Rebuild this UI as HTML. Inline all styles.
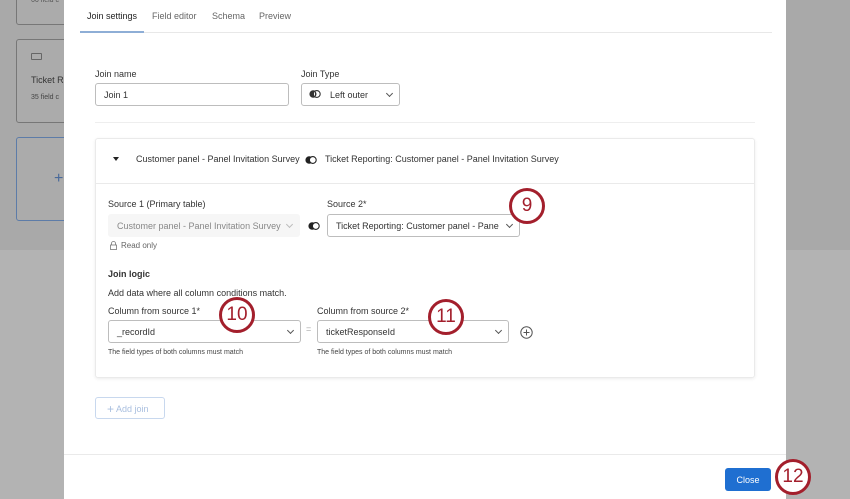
<!DOCTYPE html>
<html><head><meta charset="utf-8"><style>
*{box-sizing:border-box;margin:0;padding:0}
body{width:850px;height:499px;overflow:hidden;position:relative;font-family:"Liberation Sans",sans-serif;color:#333;background:#b3b3b3}
.a{position:absolute}
.t{font-size:9px;white-space:nowrap}
.inp{position:absolute;border:1px solid #bdbdbd;border-radius:3px;background:#fff;font-size:9px;color:#333;padding-left:8px;display:flex;align-items:center;white-space:nowrap;overflow:hidden}
.chev{position:absolute;right:7px;top:7px;width:5px;height:5px;border-right:1px solid #555;border-bottom:1px solid #555;transform:rotate(45deg)}
.circ{position:absolute;width:36px;height:36px;border:3px solid #a31f2c;border-radius:50%;background:#fff;color:#a31f2c;font-size:19px;display:flex;align-items:center;justify-content:center}
.ven{position:absolute;width:12px;height:10px}
</style></head><body>
<div class="a" style="left:0;top:0;width:850px;height:250px;background:#a9a9a9"></div>
<div class="a" style="left:16px;top:-5px;width:60px;height:30px;border:1px solid #777;border-radius:3px;background:#ababab"></div>
<div class="a t" style="left:31px;top:-3px;font-size:7px;color:#555">66 field c</div>
<div class="a" style="left:16px;top:39px;width:60px;height:84px;border:1px solid #777;border-radius:3px;background:#ababab"></div>
<div class="a" style="left:31px;top:53px;width:11px;height:7px;border:1px solid #666;border-radius:1px"></div>
<div class="a t" style="left:31px;top:75px;color:#333">Ticket R</div>
<div class="a t" style="left:31px;top:94px;font-size:7px;color:#444">35 field c</div>
<div class="a" style="left:16px;top:137px;width:60px;height:84px;border:1px solid #5d7ca8;border-radius:3px;background:#ababab"></div>
<div class="a" style="left:54px;top:170px;font-size:16px;color:#4a6a9a">+</div>
<div class="a" style="left:64px;top:0;width:722px;height:499px;background:#fff"></div>
<div class="a" style="left:80px;top:32px;width:692px;height:1px;background:#e8e8e8"></div>
<div class="a" style="left:80px;top:31px;width:64px;height:2px;background:#8eaed6"></div>
<div class="a t" style="left:87px;top:11px;color:#222">Join settings</div>
<div class="a t" style="left:152px;top:11px;color:#666">Field editor</div>
<div class="a t" style="left:212px;top:11px;color:#666">Schema</div>
<div class="a t" style="left:259px;top:11px;color:#666">Preview</div>

<div class="a t" style="left:95px;top:69px">Join name</div>
<div class="inp" style="left:95px;top:83px;width:194px;height:23px">Join 1</div>
<div class="a t" style="left:301px;top:69px">Join Type</div>
<div class="inp" style="left:301px;top:83px;width:99px;height:23px;padding-left:28px">Left outer<span class="chev"></span></div>
<svg class="ven" style="left:309px;top:89px" viewBox="0 0 12 10"><circle cx="4.2" cy="5" r="3.8" fill="#333"/><circle cx="7.8" cy="5" r="3.4" fill="#fff" stroke="#333" stroke-width="1.1"/><path d="M6 2.2a3.4 3.4 0 0 1 0 5.6" fill="#333"/></svg>
<div class="a" style="left:95px;top:122px;width:660px;height:1px;background:#eee"></div>

<div class="a" style="left:95px;top:138px;width:660px;height:240px;border:1px solid #eaeaea;border-radius:3px;box-shadow:0 1px 3px rgba(0,0,0,.08)"></div>
<div class="a" style="left:96px;top:183px;width:658px;height:1px;background:#eaeaea"></div>
<div class="a" style="left:113px;top:157px;width:0;height:0;border-left:3px solid transparent;border-right:3px solid transparent;border-top:4px solid #222"></div>
<div class="a t" style="left:136px;top:154px">Customer panel - Panel Invitation Survey</div>
<svg class="ven" style="left:305px;top:155px" viewBox="0 0 12 10"><circle cx="4.2" cy="5" r="3.8" fill="#222"/><circle cx="7.8" cy="5" r="3.4" fill="#fff" stroke="#222" stroke-width="1.1"/></svg>
<div class="a t" style="left:325px;top:154px">Ticket Reporting: Customer panel - Panel Invitation Survey</div>

<div class="a t" style="left:108px;top:199px">Source 1 (Primary table)</div>
<div class="inp" style="left:108px;top:214px;width:192px;height:23px;background:#f6f6f6;border-color:#f6f6f6;color:#888">Customer panel - Panel Invitation Survey<span class="chev" style="border-color:#bbb"></span></div>
<svg class="ven" style="left:308px;top:221px" viewBox="0 0 12 10"><circle cx="4.2" cy="5" r="3.8" fill="#222"/><circle cx="7.8" cy="5" r="3.4" fill="#fff" stroke="#222" stroke-width="1.1"/></svg>
<div class="a t" style="left:327px;top:199px">Source 2*</div>
<div class="inp" style="left:327px;top:214px;width:193px;height:23px;padding-right:20px"><span style="overflow:hidden;width:166px;display:inline-block">Ticket Reporting: Customer panel - Panel I</span><span class="chev"></span></div>
<svg class="a" style="left:110px;top:241px" width="7" height="9" viewBox="0 0 7 9"><path d="M1.5 4V2.5a2 2 0 0 1 4 0V4" fill="none" stroke="#777" stroke-width=".8"/><rect x=".5" y="4" width="6" height="4.5" fill="none" stroke="#777" stroke-width=".8"/></svg>
<div class="a t" style="left:121px;top:241px;font-size:8px;color:#666">Read only</div>

<div class="a t" style="left:108px;top:269px;font-weight:bold">Join logic</div>
<div class="a t" style="left:108px;top:288px">Add data where all column conditions match.</div>
<div class="a t" style="left:108px;top:306px">Column from source 1*</div>
<div class="inp" style="left:108px;top:320px;width:193px;height:23px">_recordId<span class="chev"></span></div>
<div class="a t" style="left:306px;top:324px;color:#aaa">=</div>
<div class="a t" style="left:317px;top:306px">Column from source 2*</div>
<div class="inp" style="left:317px;top:320px;width:192px;height:23px">ticketResponseId<span class="chev"></span></div>
<svg class="a" style="left:520px;top:326px" width="13" height="13" viewBox="0 0 13 13"><circle cx="6.5" cy="6.5" r="5.7" fill="none" stroke="#555" stroke-width="1"/><path d="M6.5 3.5v6M3.5 6.5h6" stroke="#555" stroke-width="1"/></svg>
<div class="a t" style="left:108px;top:349px;font-size:7px;color:#444">The field types of both columns must match</div>
<div class="a t" style="left:317px;top:349px;font-size:7px;color:#444">The field types of both columns must match</div>

<div class="a" style="left:95px;top:397px;width:70px;height:22px;border:1px solid #c8d8ee;border-radius:3px"></div>
<div class="a t" style="left:107px;top:402px;color:#a9bfdf"><span style="font-size:12px;vertical-align:-1px">+</span> Add join</div>

<div class="a" style="left:64px;top:454px;width:722px;height:1px;background:#eaeaea"></div>
<div class="a" style="left:725px;top:468px;width:46px;height:23px;background:#1f6fd1;border-radius:3px;color:#fff;font-size:9px;display:flex;align-items:center;justify-content:center">Close</div>

<div class="circ" style="left:509px;top:188px">9</div>
<div class="circ" style="left:219px;top:297px">10</div>
<div class="circ" style="left:428px;top:299px">11</div>
<div class="circ" style="left:775px;top:459px">12</div>
</body></html>
